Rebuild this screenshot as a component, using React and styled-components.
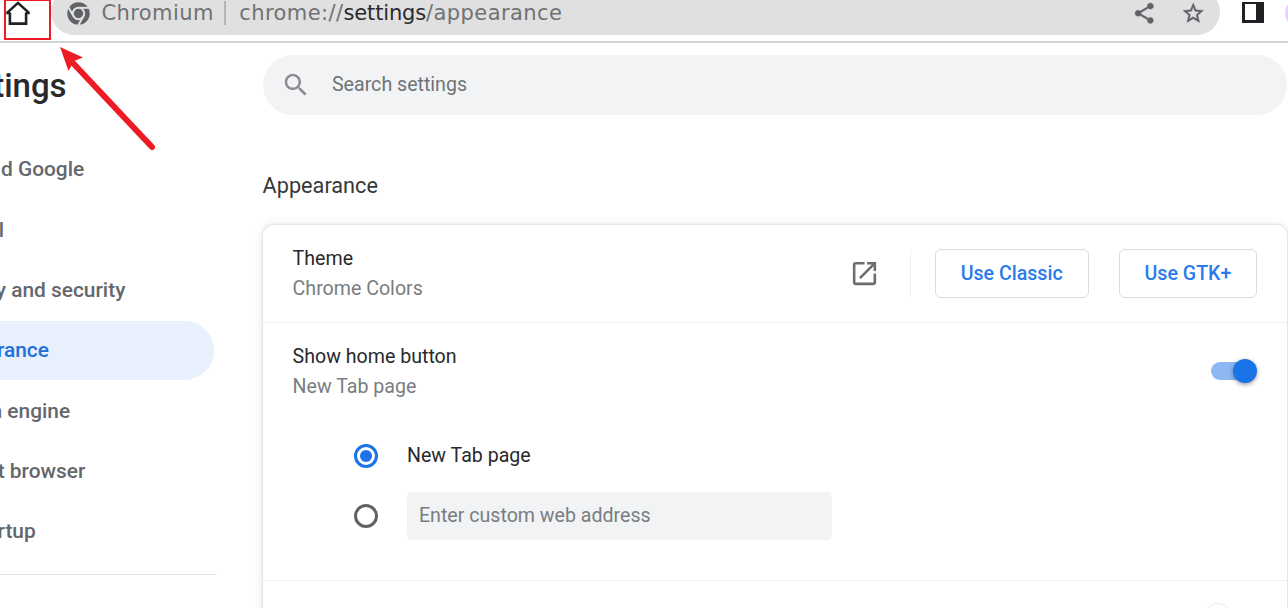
import React from "react";
import styled, { createGlobalStyle } from "styled-components";

const GlobalStyle = createGlobalStyle`
  *, *::before, *::after { box-sizing: border-box; }
  body {
    margin: 0;
    background: #fff;
    overflow: hidden;
    font-family: Roboto, "Liberation Sans", sans-serif;
    color: #28292c;
  }
`;

const Page = styled.div`
  position: relative;
  width: 1288px;
  height: 608px;
  overflow: hidden;
`;

/* Browser toolbar */
const Toolbar = styled.header`
  display: flex;
  align-items: flex-start;
  height: 43px;
  overflow: hidden;
  border-bottom: 2px solid #d2d2d2;
`;

const HomeButton = styled.div`
  flex: none;
  width: 51px;
  height: 41px;
  padding-left: 4px;
`;

const HomeIcon = styled.svg`
  display: block;
  width: 28px;
  height: 26px;
`;

const Omnibox = styled.div`
  flex: none;
  display: flex;
  align-items: center;
  width: 1169px;
  height: 46px;
  margin-top: -11px;
  padding: 2px 15px 0 15.5px;
  border-radius: 23px;
  background: #e0e0e0;
  color: #707275;
  font-family: "DejaVu Sans", sans-serif;
  font-size: 21px;
  line-height: 24px;
  white-space: nowrap;
`;

const SiteIcon = styled.svg`
  flex: none;
  width: 23px;
  height: 23px;
  margin-right: 12px;
`;

const SiteName = styled.span`
  padding-bottom: 1px;
  letter-spacing: 0.4px;
`;

const OmniboxDivider = styled.span`
  width: 1.5px;
  height: 24px;
  margin: 0 13.5px 0 10.5px;
  background: #b3b4b6;
`;

const UrlPart = styled.span`
  padding-bottom: 1px;
  letter-spacing: ${(p) => (p.$strong ? "-0.15px" : "0.42px")};
  color: ${(p) => (p.$strong ? "#292a2d" : "inherit")};
`;

const OmniboxActions = styled.div`
  display: flex;
  gap: 24px;
  margin-left: auto;
`;

const ActionIcon = styled.svg`
  width: 24.5px;
  height: 24.5px;
  fill: #5f6368;
  stroke: #5f6368;
  stroke-width: 0.4px;
`;

const PanelIcon = styled.div`
  flex: none;
  width: 22px;
  height: 21px;
  margin: 2px 21px 0 22px;
  border: solid #202124;
  border-width: 2px 8px 3px 3px;
  background: #fff;
`;

const Avatar = styled.div`
  flex: none;
  width: 30px;
  height: 30px;
  margin-top: -2px;
  border-radius: 50%;
  background: #e4d0fb;
`;

/* Settings page */
const Body = styled.div`
  display: flex;
`;

const Sidebar = styled.nav`
  flex: none;
  width: 262.6px;
  height: 566px;
`;

const Title = styled.h1`
  margin: 0 0 0 -55.5px;
  padding-top: 23px;
  height: 97px;
  font-size: 33px;
  line-height: 40px;
  font-weight: 500;
`;

const NavItem = styled.div`
  display: flex;
  align-items: center;
  width: 213.5px;
  height: 59.4px;
  margin-bottom: 0.95px;
  padding-bottom: 0.5px;
  border-radius: 0 30px 30px 0;
  background: ${(p) => (p.$active ? "#e8effd" : "transparent")};
  color: ${(p) => (p.$active ? "#1f6fdb" : "#64686d")};
  font-size: 20.9px;
  font-weight: 500;
  white-space: nowrap;
`;

const NavLabel = styled.span`
  margin-left: -62.7px;
`;

const NavDivider = styled.div`
  width: 217px;
  height: 1.5px;
  margin-top: 12.5px;
  background: #e4e5e6;
`;

const Main = styled.main`
  flex: none;
  width: 1024.6px;
  padding-top: 11.5px;
`;

const SearchBox = styled.div`
  display: flex;
  align-items: center;
  height: 60.5px;
  padding-left: 18.4px;
  border-radius: 31px;
  background: #f1f3f4;
  color: #6f7378;
  font-size: 19.6px;
`;

const SearchIcon = styled.svg`
  width: 30px;
  height: 30px;
  margin-right: 21px;
  fill: #8a8c8f;
`;

const SectionTitle = styled.h2`
  margin: 57px 0 0;
  height: 53px;
  font-size: 21.7px;
  line-height: 28px;
  font-weight: 400;
  color: #36373a;
`;

const Card = styled.section`
  height: 420px;
  border-radius: 11px;
  background: #fff;
  box-shadow: 0 0 2px 1px rgba(60, 64, 67, 0.11), 0 1px 8px 2px rgba(60, 64, 67, 0.09);
`;

const Row = styled.div`
  display: flex;
  align-items: center;
  height: ${(p) => p.$height}px;
  padding: 0 30px;
`;

const RowText = styled.div`
  flex: 1;
  font-size: 19.6px;
  line-height: 30px;
`;

const Secondary = styled.div`
  color: #797d81;
`;

const OpenIcon = styled.svg`
  width: 31px;
  height: 31px;
  margin-right: 30px;
  fill: #6a6e73;
`;

const RowSeparator = styled.div`
  width: 1px;
  height: 48px;
  margin-right: 24px;
  background: #f0f1f3;
`;

const OutlineButton = styled.button`
  width: ${(p) => p.$width}px;
  height: 48.5px;
  margin: 0 0 0 ${(p) => (p.$spaced ? 30 : 0)}px;
  padding: 0;
  border: 1.5px solid #dadce0;
  border-radius: 6px;
  background: #fff;
  color: #2a7ced;
  font: 500 19.6px Roboto, sans-serif;
`;

const SwitchTrack = styled.div`
  display: flex;
  align-items: center;
  justify-content: ${(p) => (p.$on ? "flex-end" : "flex-start")};
  width: 39px;
  height: 18px;
  margin: 0 7.5px 1px 0;
  border-radius: 9px;
  background: ${(p) => (p.$on ? "#8db8f4" : "#bdc1c6")};
`;

const SwitchKnob = styled.div`
  flex: none;
  width: 24px;
  height: 24px;
  margin: 0 -7.5px;
  border-radius: 50%;
  background: ${(p) => (p.$on ? "#1a73e8" : "#fff")};
  box-shadow: 0 1.5px 4px rgba(0, 0, 0, 0.4);
`;

const HomeSetting = styled.div`
  height: 259px;
  border: solid #eef0f1;
  border-width: 1px 0;
`;

const Choices = styled.div`
  padding-top: 6px;
`;

const Choice = styled.div`
  display: flex;
  align-items: center;
  height: 60px;
  padding-left: 91px;
  font-size: 19.6px;
`;

const Radio = styled.div`
  display: grid;
  place-items: center;
  width: 24px;
  height: 24px;
  margin-right: 29.4px;
  border: 3px solid ${(p) => (p.$checked ? "#1a73e8" : "#5f6368")};
  border-radius: 50%;

  &::after {
    content: "";
    width: 12px;
    height: 12px;
    border-radius: 50%;
    background: ${(p) => (p.$checked ? "#1a73e8" : "transparent")};
  }
`;

const ChoiceLabel = styled.span`
  padding-bottom: 2px;
`;

const AddressField = styled.div`
  width: 425.5px;
  height: 48px;
  padding: 0 12px;
  border-radius: 5px;
  background: #f1f3f4;
  color: #797d81;
  line-height: 47px;
`;

const ClippedRow = styled.div`
  display: flex;
  justify-content: flex-end;
  padding: 23px 30px 0;
`;

const ClippedKnob = styled.div`
  width: 24px;
  height: 24px;
  margin-right: 27px;
  border-radius: 50%;
  background: #fff;
  box-shadow: 0 0 3px rgba(0, 0, 0, 0.18);
`;

/* Red annotation over the page */
const Marker = styled.svg`
  position: absolute;
  left: 0;
  top: 0;
  width: 170px;
  height: 160px;
`;

const NAV = [
  "You and Google",
  "Autofill",
  "Privacy and security",
  "Appearance",
  "Search engine",
  "Default browser",
  "On startup",
];

export default function App() {
  return (
    <Page>
      <GlobalStyle />
      <Toolbar>
        <HomeButton>
          <HomeIcon viewBox="4 0 28 26">
            <path
              d="M9.900 12.600V23.600H26.100V12.600M6.200 13H10M26 13H29.800M7 12.900L18 2.900L29 12.900"
              fill="none"
              stroke="#202124"
              strokeWidth="2.6"
            />
          </HomeIcon>
        </HomeButton>
        <Omnibox>
          <SiteIcon viewBox="-11.5 -11.5 23 23">
            <circle r="11.2" fill="#5f6368" />
            <g stroke="#e0e0e0" strokeWidth="2" fill="none">
              <circle r="5.7" />
              <path d="M0-5.7H11" />
              <path d="M0-5.7H11" transform="rotate(120)" />
              <path d="M0-5.7H11" transform="rotate(240)" />
            </g>
          </SiteIcon>
          <SiteName>Chromium</SiteName>
          <OmniboxDivider />
          <UrlPart>chrome://</UrlPart>
          <UrlPart $strong>settings</UrlPart>
          <UrlPart>/appearance</UrlPart>
          <OmniboxActions>
            <ActionIcon viewBox="0 0 24 24">
              <path d="M18 16.08c-.76 0-1.44.3-1.96.77L8.91 12.7c.05-.23.09-.46.09-.7s-.04-.47-.09-.7l7.05-4.11c.54.5 1.25.81 2.04.81 1.66 0 3-1.34 3-3s-1.34-3-3-3-3 1.34-3 3c0 .24.04.47.09.7L8.04 9.81C7.5 9.31 6.79 9 6 9c-1.66 0-3 1.34-3 3s1.34 3 3 3c.79 0 1.5-.31 2.04-.81l7.12 4.16c-.05.21-.08.43-.08.65 0 1.61 1.31 2.92 2.92 2.92s2.92-1.31 2.92-2.92-1.31-2.92-2.92-2.92z" />
            </ActionIcon>
            <ActionIcon viewBox="0 0 24 24">
              <path d="M22 9.24l-7.19-.62L12 2 9.19 8.63 2 9.24l5.46 4.73L5.82 21 12 17.27 18.18 21l-1.63-7.03L22 9.24zM12 15.4l-3.76 2.27 1-4.28-3.32-2.88 4.38-.38L12 6.1l1.71 4.04 4.38.38-3.32 2.88 1 4.28L12 15.4z" />
            </ActionIcon>
          </OmniboxActions>
        </Omnibox>
        <PanelIcon />
        <Avatar />
      </Toolbar>

      <Body>
        <Sidebar>
          <Title>Settings</Title>
          {NAV.map((label, i) => (
            <NavItem key={label} $active={i === 3}>
              <NavLabel>{label}</NavLabel>
            </NavItem>
          ))}
          <NavDivider />
        </Sidebar>

        <Main>
          <SearchBox>
            <SearchIcon viewBox="0 0 24 24">
              <path d="M15.5 14h-.79l-.28-.27C15.41 12.59 16 11.11 16 9.5 16 5.91 13.09 3 9.5 3S3 5.91 3 9.5 5.91 16 9.5 16c1.61 0 3.09-.59 4.23-1.57l.27.28v.79l5 4.99L20.49 19l-4.99-5zm-6 0C7.01 14 5 11.99 5 9.5S7.01 5 9.5 5 14 7.01 14 9.5 11.99 14 9.5 14z" />
            </SearchIcon>
            Search settings
          </SearchBox>
          <SectionTitle>Appearance</SectionTitle>
          <Card>
            <Row $height={97}>
              <RowText>
                <div>Theme</div>
                <Secondary>Chrome Colors</Secondary>
              </RowText>
              <OpenIcon viewBox="0 0 24 24">
                <path d="M19 19H5V5h7V3H5c-1.11 0-2 .9-2 2v14c0 1.1.89 2 2 2h14c1.1 0 2-.9 2-2v-7h-2v7zM14 3v2h3.59l-9.83 9.83 1.41 1.41L19 6.41V10h2V3h-7z" />
              </OpenIcon>
              <RowSeparator />
              <OutlineButton $width={154}>Use Classic</OutlineButton>
              <OutlineButton $width={138.5} $spaced>
                Use GTK+
              </OutlineButton>
            </Row>
            <HomeSetting>
              <Row $height={97}>
                <RowText>
                  <div>Show home button</div>
                  <Secondary>New Tab page</Secondary>
                </RowText>
                <SwitchTrack $on>
                  <SwitchKnob $on />
                </SwitchTrack>
              </Row>
              <Choices>
                <Choice>
                  <Radio $checked />
                  <ChoiceLabel>New Tab page</ChoiceLabel>
                </Choice>
                <Choice>
                  <Radio />
                  <AddressField>Enter custom web address</AddressField>
                </Choice>
              </Choices>
            </HomeSetting>
            <ClippedRow>
              <ClippedKnob />
            </ClippedRow>
          </Card>
        </Main>
      </Body>

      <Marker viewBox="0 0 170 160">
        <rect x="5" y="0" width="45" height="39" fill="none" stroke="#ed1c24" strokeWidth="2" />
        <path d="M152 147L72 62" stroke="#ed1c24" strokeWidth="6" strokeLinecap="round" />
        <path d="M60 47l23 10.500-9 3.500-5.500 10z" fill="#ed1c24" />
      </Marker>
    </Page>
  );
}
